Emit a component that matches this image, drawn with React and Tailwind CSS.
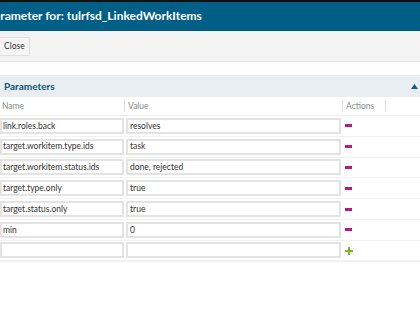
import React from 'react';

const rows = [
    { name: 'link.roles.back', value: 'resolves' },
    { name: 'target.workitem.type.ids', value: 'task' },
    { name: 'target.workitem.status.ids', value: 'done, rejected' },
    { name: 'target.type.only', value: 'true' },
    { name: 'target.status.only', value: 'true' },
    { name: 'min', value: '0' },
];

const Minus = () => <div className="w-[7px] h-[3px] bg-[#b8168f]" />;

const Plus = () => (
    <svg width="8" height="8" viewBox="0 0 8 8">
        <path d="M3 0h2v3h3v2H5v3H3V5H0V3h3z" fill="#76b82a" />
    </svg>
);

const Field = ({ value, className }) => (
    <div className={`h-[16px] border-2 border-[#e3e3e3] bg-white flex items-center px-[1px] text-[8.5px] text-[#333] whitespace-nowrap overflow-hidden ${className}`}>
        {value}
    </div>
);

const App = () => {
    return (
        <div className="w-[420px] h-[315px] bg-white overflow-hidden font-['Lato',sans-serif]">
            <div className="h-[2px] bg-[#111]" />
            {/* Dialog title */}
            <div className="h-[29px] bg-[#005f86] border-b border-[#0d5576] flex items-center overflow-hidden">
                <span className="-ml-[13px] text-white font-bold text-[12px] whitespace-nowrap">Parameter for: tulrfsd_LinkedWorkItems</span>
            </div>
            {/* Toolbar */}
            <div className="h-[31px] bg-[#f3f3f3] border-b border-[#e4e4e4] flex items-center">
                <button className="h-[19px] px-[4px] ml-[-1px] bg-[#f6f6f6] border border-[#e0e0e0] rounded-[2px] text-[8.5px] text-[#333]">Close</button>
            </div>
            <div className="h-[13px]" />
            {/* Parameters section */}
            <div className="h-[22px] bg-[#e9eef2] flex items-center justify-between pl-[4px] pr-[2px]">
                <span className="text-[10px] font-bold text-[#0b557a]">Parameters</span>
                <svg width="7" height="5" viewBox="0 0 7 5"><path d="M0 5L3.5 0L7 5z" fill="#135f8c" /></svg>
            </div>
            <div className="h-[19px] flex items-center text-[8.5px] text-[#8a8a8a] border-b border-[#efefef]">
                <div className="w-[124px] pl-[2px]">Name</div>
                <div className="w-[218px] border-l border-[#dedede] pl-[3px] leading-[12px]">Value</div>
                <div className="w-[44px] border-l border-r border-[#dedede] pl-[3px] leading-[12px]">Actions</div>
            </div>
            {rows.map((r, i) => (
                <div key={i} className="h-[20.8px] flex items-center border-b border-[#f1f1f1]">
                    <Field value={r.name} className="w-[124px]" />
                    <Field value={r.value} className="w-[215px] ml-[2px] pl-[2px]" />
                    <div className="ml-[4px]"><Minus /></div>
                </div>
            ))}
            <div className="h-[21px] flex items-center border-b-2 border-[#f1f1f1]">
                <Field value="" className="w-[124px]" />
                <Field value="" className="w-[215px] ml-[2px]" />
                <div className="ml-[4px] mt-[1px]"><Plus /></div>
            </div>
        </div>
    );
};

export default App;
